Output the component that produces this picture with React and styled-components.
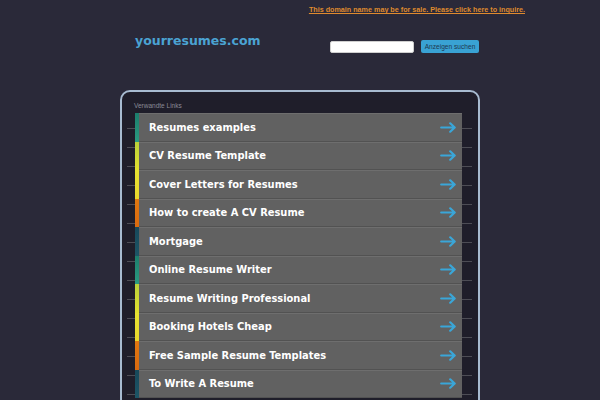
import React from 'react';
import styled, { createGlobalStyle } from 'styled-components';

const GlobalStyle = createGlobalStyle`
  html, body {
    margin: 0;
    padding: 0;
    background: #2a2939;
  }
  body {
    font-family: 'DejaVu Sans', Verdana, sans-serif;
    overflow: hidden;
  }
`;

const Page = styled.div`
  width: 600px;
  height: 400px;
  background: #2a2939;
  overflow: hidden;
`;

const TopBar = styled.div`
  display: flex;
  justify-content: flex-end;
  padding: 5px 75px 0 0;
  height: 14px;
`;

const SaleLink = styled.a`
  font-family: 'Liberation Sans', Arial, sans-serif;
  font-size: 7.2px;
  font-weight: bold;
  color: #df8a2e;
  text-decoration: underline;
  line-height: 9px;
`;

const Header = styled.div`
  display: flex;
  align-items: flex-start;
  justify-content: space-between;
  margin: 13px 0 0 135px;
  width: 344px;
  height: 58px;
`;

const Logo = styled.div`
  font-family: 'DejaVu Sans', Verdana, sans-serif;
  font-size: 12.5px;
  font-weight: bold;
  color: #4ba3d3;
  line-height: 16px;
  margin-top: 1px;
`;

const Search = styled.form`
  display: flex;
  align-items: center;
  gap: 7px;
  margin-top: 8px;
`;

const SearchInput = styled.input`
  width: 84px;
  height: 12px;
  box-sizing: border-box;
  border: 1px solid #cfcfcf;
  border-radius: 2px;
  background: #fff;
  padding: 0;
`;

const SearchButton = styled.button`
  height: 13px;
  width: 58px;
  padding: 0;
  border: none;
  border-radius: 2px;
  background: #39a2d4;
  color: #1d3850;
  font-family: 'Liberation Sans', Arial, sans-serif;
  font-size: 6.6px;
  line-height: 13px;
`;

const Panel = styled.div`
  margin-left: 120px;
  width: 360px;
  height: 340px;
  box-sizing: border-box;
  border: 2px solid #a7bbd0;
  border-radius: 10px;
  background: #1f1e2a;
  padding-top: 10px;
`;

const PanelTitle = styled.div`
  font-family: 'Liberation Sans', Arial, sans-serif;
  font-size: 6.5px;
  color: #8a8a96;
  padding-left: 12px;
  line-height: 8px;
  height: 11px;
`;

const ListArea = styled.div`
  margin: 0 6px 0 5px;
  padding: 0 10px 0 8px;
  background: repeating-linear-gradient(
    to bottom,
    transparent 0,
    transparent 15px,
    #4d4d55 15px,
    #4d4d55 16px,
    transparent 16px,
    transparent 19px
  );
`;

const List = styled.ul`
  list-style: none;
  margin: 0;
  padding: 0;
`;

const Row = styled.li`
  display: flex;
  height: 28.5px;
  box-sizing: border-box;
  background: #616161;
  border-top: 1px solid #6e6e6e;
  border-bottom: 1px solid #525252;
`;

const ColorBar = styled.span`
  width: 4px;
  flex-shrink: 0;
  margin: -1px 0;
  background: ${p => p.$color};
`;

const RowLink = styled.a`
  flex: 1;
  display: flex;
  align-items: center;
  justify-content: space-between;
  padding: 0 5px 0 10px;
  color: #ffffff;
  text-decoration: none;
  font-family: 'DejaVu Sans Condensed', 'DejaVu Sans', Verdana, sans-serif;
  font-stretch: condensed;
  font-weight: bold;
  font-size: 11px;
`;

const Arrow = () => (
  <svg width="17" height="11" viewBox="0 0 17 11">
    <path
      d="M1.2 5.5 H14.5 M10.2 1.3 L14.7 5.5 L10.2 9.7"
      fill="none"
      stroke="#3aa6d8"
      strokeWidth="2.2"
      strokeLinecap="round"
      strokeLinejoin="round"
    />
  </svg>
);

const bars = [
  'linear-gradient(#1c7d6c, #2a9a80)',
  'linear-gradient(#b8d03a, #e2e02e)',
  'linear-gradient(#e6e232, #e9d82c)',
  'linear-gradient(#e0770f, #d96a10)',
  'linear-gradient(#17485a, #1d5566)',
];

const links = [
  'Resumes examples',
  'CV Resume Template',
  'Cover Letters for Resumes',
  'How to create A CV Resume',
  'Mortgage',
  'Online Resume Writer',
  'Resume Writing Professional',
  'Booking Hotels Cheap',
  'Free Sample Resume Templates',
  'To Write A Resume',
];

const App = () => (
  <Page>
    <GlobalStyle />
    <TopBar>
      <SaleLink href="#">This domain name may be for sale. Please click here to inquire.</SaleLink>
    </TopBar>
    <Header>
      <Logo>yourresumes.com</Logo>
      <Search onSubmit={e => e.preventDefault()}>
        <SearchInput type="text" />
        <SearchButton type="submit">Anzeigen suchen</SearchButton>
      </Search>
    </Header>
    <Panel>
      <PanelTitle>Verwandte Links</PanelTitle>
      <ListArea>
        <List>
          {links.map((text, i) => (
            <Row key={text}>
              <ColorBar $color={bars[i % bars.length]} />
              <RowLink href="#">
                {text}
                <Arrow />
              </RowLink>
            </Row>
          ))}
        </List>
      </ListArea>
    </Panel>
  </Page>
);

export default App;
